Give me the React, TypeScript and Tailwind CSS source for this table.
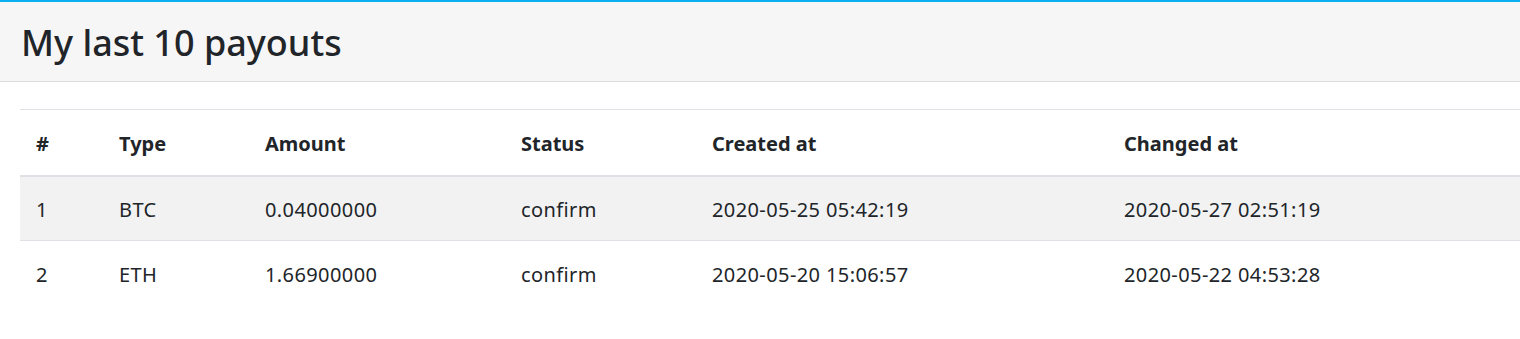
const payouts = [
  { id: 1, type: 'BTC', amount: '0.04000000', status: 'confirm', created: '2020-05-25 05:42:19', changed: '2020-05-27 02:51:19' },
  { id: 2, type: 'ETH', amount: '1.66900000', status: 'confirm', created: '2020-05-20 15:06:57', changed: '2020-05-22 04:53:28' },
]

export default function App() {
  return (
    <div className="min-h-[339px] bg-white font-['Noto_Sans',sans-serif] text-[#212529]">
      <div className="h-[2px] bg-[#0aaff0]" />
      <header className="flex h-[80px] items-center border-b border-[#dcdcdc] bg-[#f6f6f6] px-[21px] pt-[3px]">
        <h1 className="text-[36px] leading-none font-medium">My last 10 payouts</h1>
      </header>

      <div className="pl-5 pt-[27px]">
        <table className="w-full table-fixed border-collapse text-left text-[20px]">
          <colgroup>
            <col className="w-[83px]" />
            <col className="w-[146px]" />
            <col className="w-[256px]" />
            <col className="w-[191px]" />
            <col className="w-[412px]" />
            <col />
          </colgroup>
          <thead>
            <tr className="h-[66px] border-t border-b-2 border-[#dee2e6]">
              <th className="px-4 pt-[3px] font-bold">#</th>
              <th className="px-4 pt-[3px] font-bold">Type</th>
              <th className="px-4 pt-[3px] font-bold">Amount</th>
              <th className="px-4 pt-[3px] font-bold">Status</th>
              <th className="px-4 pt-[3px] font-bold">Created at</th>
              <th className="px-4 pt-[3px] font-bold">Changed at</th>
            </tr>
          </thead>
          <tbody className="tracking-[0.02em]">
            {payouts.map((p, i) => (
              <tr key={p.id} className={`h-[65px] border-t border-[#dee2e6] ${i % 2 === 0 ? 'bg-[#f2f2f2]' : ''}`}>
                <td className="px-4 pt-[3px]">{p.id}</td>
                <td className="px-4 pt-[3px]">{p.type}</td>
                <td className="px-4 pt-[3px]">{p.amount}</td>
                <td className="px-4 pt-[3px]">{p.status}</td>
                <td className="px-4 pt-[3px]">{p.created}</td>
                <td className="px-4 pt-[3px]">{p.changed}</td>
              </tr>
            ))}
          </tbody>
        </table>
      </div>
    </div>
  )
}
